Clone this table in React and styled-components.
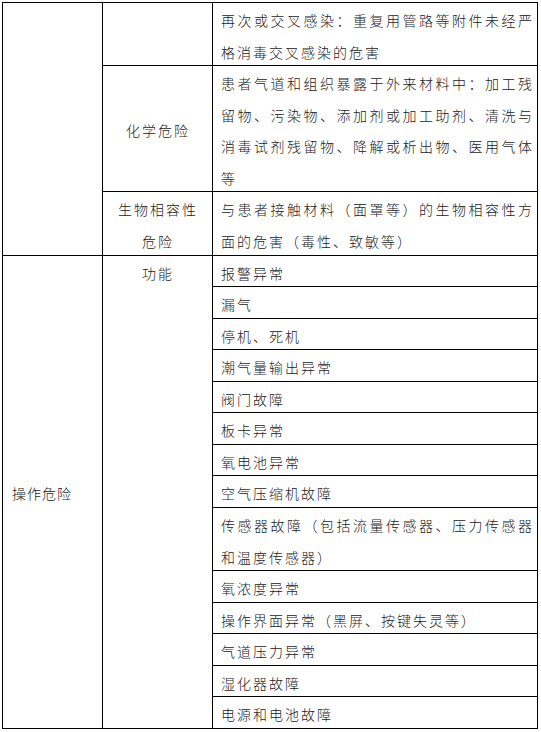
import React from "react";
import styled, { createGlobalStyle } from "styled-components";

const GlobalStyle = createGlobalStyle`
  html, body { margin: 0; padding: 0; background: #ffffff; }
  body {
    font-family: "Noto Sans CJK SC", "Noto Sans", sans-serif;
  }
`;

const Page = styled.div`
  padding: 2px 0 0 2px;
  width: 541px;
  box-sizing: border-box;
`;

const Table = styled.table`
  border-collapse: separate;
  border-spacing: 0;
  table-layout: fixed;
  width: 536px;
  border-top: 1px solid #000;
  border-left: 1px solid #000;
  color: #222;
  font-size: 14px;
  font-weight: 300;
`;

const Cell = styled.td`
  box-shadow: inset -1px -1px 0 #000;
  padding: ${(p) => (p.$pad ? p.$pad : "0 4px 0 8px")};
  line-height: 31.57px;
  letter-spacing: ${(p) => (p.$tight ? "1px" : "2px")};
  text-align: ${(p) => p.$align || "justify"};
  vertical-align: ${(p) => p.$valign || "middle"};
  word-break: break-all;
`;

/* lowers the glyphs inside the line box without growing it */
const Text = styled.span`
  line-height: 20px;
  vertical-align: -2px;
`;

const topRows = [
  { head: null, text: "再次或交叉感染：重复用管路等附件未经严格消毒交叉感染的危害" },
  { head: "化学危险", text: "患者气道和组织暴露于外来材料中：加工残留物、污染物、添加剂或加工助剂、清洗与消毒试剂残留物、降解或析出物、医用气体等" },
  { head: "生物相容性危险", text: "与患者接触材料（面罩等）的生物相容性方面的危害（毒性、致敏等）" },
];

const functionRows = [
  "报警异常",
  "漏气",
  "停机、死机",
  "潮气量输出异常",
  "阀门故障",
  "板卡异常",
  "氧电池异常",
  "空气压缩机故障",
  "传感器故障（包括流量传感器、压力传感器和温度传感器）",
  "氧浓度异常",
  "操作界面异常（黑屏、按键失灵等）",
  "气道压力异常",
  "湿化器故障",
  "电源和电池故障",
];

const headPad = "0 8px 0 8px";

export default function App() {
  return (
    <Page>
      <GlobalStyle />
      <Table>
        <colgroup>
          <col style={{ width: 100 }} />
          <col style={{ width: 110 }} />
          <col style={{ width: 325 }} />
        </colgroup>
        <tbody>
          {topRows.map((r, i) => (
            <tr key={r.text}>
              {i === 0 && <Cell rowSpan={3} />}
              <Cell $align="center" $pad={headPad}>
                {r.head && <Text>{r.head}</Text>}
              </Cell>
              <Cell>
                <Text>{r.text}</Text>
              </Cell>
            </tr>
          ))}
          {functionRows.map((t, i) => (
            <tr key={t}>
              {i === 0 && (
                <>
                  <Cell rowSpan={functionRows.length} $align="left" $pad="0 4px 0 9px" $tight>
                    <Text>操作危险</Text>
                  </Cell>
                  <Cell rowSpan={functionRows.length} $align="center" $valign="top" $pad={headPad}>
                    <Text>功能</Text>
                  </Cell>
                </>
              )}
              <Cell>
                <Text>{t}</Text>
              </Cell>
            </tr>
          ))}
        </tbody>
      </Table>
    </Page>
  );
}
